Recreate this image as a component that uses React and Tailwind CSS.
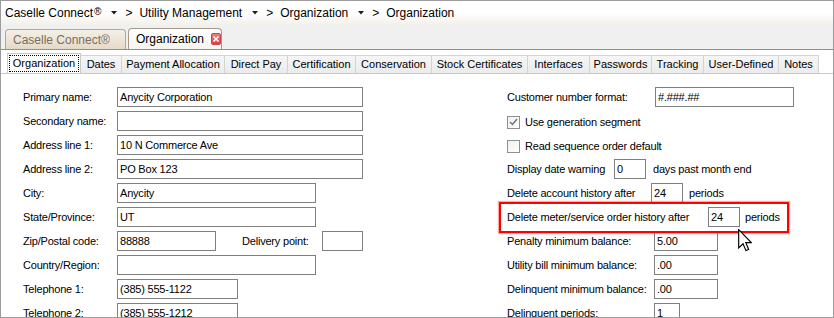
import React from 'react'

const leftRows = [
  { label: 'Primary name:', w: 'w-[246px]', value: 'Anycity Corporation' },
  { label: 'Secondary name:', w: 'w-[246px]', value: '' },
  { label: 'Address line 1:', w: 'w-[246px]', value: '10 N Commerce Ave' },
  { label: 'Address line 2:', w: 'w-[246px]', value: 'PO Box 123' },
  { label: 'City:', w: 'w-[199px]', value: 'Anycity' },
  { label: 'State/Province:', w: 'w-[199px]', value: 'UT' },
  { label: 'Zip/Postal code:', w: 'w-[99px]', value: '88888', extra: true },
  { label: 'Country/Region:', w: 'w-[199px]', value: '' },
  { label: 'Telephone 1:', w: 'w-[121px]', value: '(385) 555-1122' },
  { label: 'Telephone 2:', w: 'w-[121px]', value: '(385) 555-1212' },
]

const innerTabs = [
  ['Organization', 'w-[74px]'],
  ['Dates', 'w-[41px]'],
  ['Payment Allocation', 'w-[103px]'],
  ['Direct Pay', 'w-[63px]'],
  ['Certification', 'w-[68px]'],
  ['Conservation', 'w-[76px]'],
  ['Stock Certificates', 'w-[96px]'],
  ['Interfaces', 'w-[62px]'],
  ['Passwords', 'w-[62px]'],
  ['Tracking', 'w-[52px]'],
  ['User-Defined', 'w-[75px]'],
  ['Notes', 'w-[40px]'],
]

function Box({ w, value }) {
  return (
    <div className={`${w} h-[20px] border border-[#7f7f7f] bg-white pl-[2px] flex items-center text-black shrink-0`}>
      {value}
    </div>
  )
}

function Check({ checked }) {
  return (
    <div className="w-[13px] h-[13px] border border-[#8e8f8f] bg-gradient-to-br from-[#f0f0f0] to-white flex items-center justify-center shrink-0">
      {checked && (
        <svg width="9" height="8" viewBox="0 0 9 8">
          <path d="M1 4 L3.5 6.5 L8 1" fill="none" stroke="#707070" strokeWidth="1.4" />
        </svg>
      )}
    </div>
  )
}

function Sep() {
  return (
    <>
      <svg className="ml-[10px] shrink-0" width="6" height="4" viewBox="0 0 6 4">
        <path d="M0 0 L6 0 L3 3.5 Z" fill="#202020" />
      </svg>
      <span className="ml-[8px] mr-[7px]">&gt;</span>
    </>
  )
}

export default function App() {
  return (
    <div className="w-[834px] h-[318px] overflow-hidden border border-[#9c9c9c] bg-white relative font-['Liberation_Sans',Arial,sans-serif] text-[11px] text-black">
      {/* breadcrumb */}
      <div className="h-[24px] bg-gradient-to-b from-white via-white to-[#f2f0ea] flex items-center pl-[4px] text-[12px]">
        <span>Caselle Connect<span className="text-[10px] relative -top-[2px] ml-[1px]">®</span></span>
        <Sep />
        <span>Utility Management</span>
        <Sep />
        <span>Organization</span>
        <Sep />
        <span>Organization</span>
      </div>

      {/* document tabs */}
      <div className="h-[25px] bg-[#f0f0f0] border-b border-[#9f8b78] flex items-end pl-[4px] gap-[2px]">
        <div className="w-[121px] h-[20px] rounded-t-[4px] border border-b-0 border-[#b3a796] bg-gradient-to-b from-[#f5f0e6] to-[#e4dac8] flex items-center pl-[7px] text-[12px] text-[#7b6e62]">
          Caselle Connect®
        </div>
        <div className="w-[94px] h-[21px] rounded-t-[4px] border border-b-0 border-[#a5978a] bg-gradient-to-b from-white to-[#f6f4ef] flex items-center pl-[7px] text-[12px]">
          <span>Organization</span>
          <span className="ml-[7px] w-[12px] h-[12px] rounded-[2px] border border-[#c44] bg-gradient-to-b from-[#f08080] to-[#d84040] flex items-center justify-center">
            <svg width="8" height="8" viewBox="0 0 8 8">
              <path d="M1.5 1.5 L6.5 6.5 M6.5 1.5 L1.5 6.5" stroke="white" strokeWidth="1.6" />
            </svg>
          </span>
        </div>
      </div>

      {/* inner tabs */}
      <div className="h-[24px] border-b border-[#c9c9c9] flex items-end pl-[6px]">
        {innerTabs.map(([t, w], i) =>
          i === 0 ? (
            <div key={t} className={`${w} h-[20px] border border-b-0 border-[#c9c9c9] bg-white p-[1px] shrink-0`}>
              <div className="h-full border border-dotted border-black flex items-center justify-center">{t}</div>
            </div>
          ) : (
            <div key={t} className={`${w} h-[18px] border border-l-0 border-b-0 border-[#d4d4d4] bg-gradient-to-b from-[#f6f6f6] to-[#ebebeb] flex items-center justify-center shrink-0`}>
              {t}
            </div>
          )
        )}
      </div>

      {/* form */}
      <div className="flex pt-[13px] pl-[22px] tracking-[-0.2px]">
        <div className="w-[484px] flex flex-col gap-[4px]">
          {leftRows.map((r) => (
            <div key={r.label} className="flex items-center h-[20px]">
              <span className="w-[94px] shrink-0">{r.label}</span>
              <Box w={r.w} value={r.value} />
              {r.extra && (
                <>
                  <span className="ml-[26px] w-[80px]">Delivery point:</span>
                  <Box w="w-[41px]" value="" />
                </>
              )}
            </div>
          ))}
        </div>

        <div className="flex flex-col gap-[4px]">
          <div className="flex items-center h-[20px]">
            <span className="w-[148px]">Customer number format:</span>
            <Box w="w-[139px]" value="#.###.##" />
          </div>
          <div className="flex items-center h-[20px] pt-[2px]">
            <Check checked />
            <span className="ml-[5px]">Use generation segment</span>
          </div>
          <div className="flex items-center h-[20px] pt-[2px]">
            <Check />
            <span className="ml-[5px]">Read sequence order default</span>
          </div>
          <div className="flex items-center h-[20px]">
            <span className="w-[107px]">Display date warning</span>
            <Box w="w-[32px]" value="0" />
            <span className="ml-[7px]">days past month end</span>
          </div>
          <div className="flex items-center h-[20px]">
            <span className="w-[144px]">Delete account history after</span>
            <Box w="w-[32px]" value="24" />
            <span className="ml-[6px]">periods</span>
          </div>
          <div className="flex items-center h-[20px]">
            <span className="w-[201px]">Delete meter/service order history after</span>
            <Box w="w-[32px]" value="24" />
            <span className="ml-[5px]">periods</span>
          </div>
          <div className="flex items-center h-[20px]">
            <span className="w-[147px]">Penalty minimum balance:</span>
            <Box w="w-[64px]" value="5.00" />
          </div>
          <div className="flex items-center h-[20px]">
            <span className="w-[147px]">Utility bill minimum balance:</span>
            <Box w="w-[64px]" value=".00" />
          </div>
          <div className="flex items-center h-[20px]">
            <span className="w-[147px]">Delinquent minimum balance:</span>
            <Box w="w-[64px]" value=".00" />
          </div>
          <div className="flex items-center h-[20px]">
            <span className="w-[147px]">Delinquent periods:</span>
            <Box w="w-[26px]" value="1" />
          </div>
        </div>
      </div>

      {/* highlight annotation */}
      <div className="absolute left-[498px] top-[201px] w-[290px] h-[31px] border-2 border-[#ff0000] shadow-[0_0_1px_1px_rgba(255,80,80,0.5)] pointer-events-none" />

      {/* mouse cursor */}
      <svg className="absolute left-[737px] top-[228px]" width="14" height="23" viewBox="0 0 12 20">
        <path d="M0.5 0.5 L0.5 16.5 L4.3 12.8 L6.8 18.8 L9.2 17.8 L6.7 11.9 L11.5 11.9 Z" fill="white" stroke="black" strokeWidth="1" strokeLinejoin="miter" />
      </svg>
    </div>
  )
}
